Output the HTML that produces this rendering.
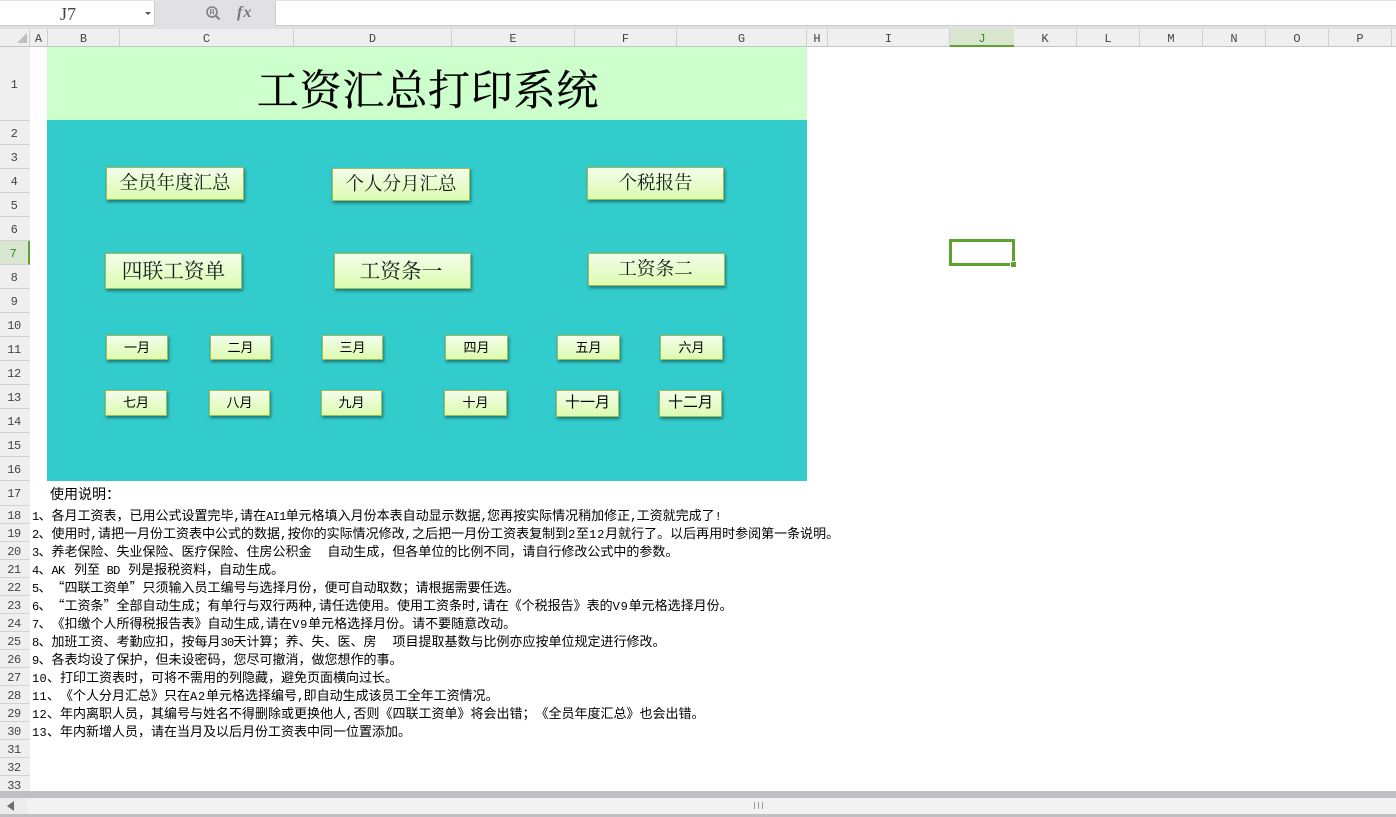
<!DOCTYPE html>
<html lang="zh"><head><meta charset="utf-8"><style>
html,body{margin:0;padding:0;width:1396px;height:817px;overflow:hidden;background:#fff}
body{position:relative;font-family:"Liberation Mono","WenQuanYi Zen Hei",monospace;color:#000;text-spacing-trim:space-all}
div{position:absolute;box-sizing:border-box}
.c,.r{background:#efefef;color:#444;font-size:12px;text-align:center;font-family:"Liberation Mono",monospace}
.c{top:29px;height:17px;line-height:20px;border-right:1px solid #cfcfcf}
.r{left:0;width:30px;border-bottom:1px solid #d2d2d2;font-size:12px;padding-right:2px;padding-top:1px;letter-spacing:-.5px}
.b{background:linear-gradient(#f4fdea,#dcfbb0);border:1px solid #a3bd55;box-shadow:1px 2px 3px rgba(0,50,50,.55);text-align:center;color:#10201a;font-family:"Noto Serif CJK SC",serif;white-space:nowrap}
.m{font-family:"WenQuanYi Zen Hei","Noto Sans CJK SC",sans-serif;font-size:13px;color:#000;line-height:21px;height:25px}
.t{left:32px;height:18px;line-height:18px;font-size:13px;font-family:"WenQuanYi Zen Hei","Noto Sans CJK SC",sans-serif;white-space:pre;color:#000}
.t span{font-family:"Liberation Mono",monospace;font-size:12px;letter-spacing:-.7px}
.t span.w{letter-spacing:.3px}
.t span.v{letter-spacing:.8px}
</style></head><body>
<div style="left:0;top:0;width:1396px;height:29px;background:#e1e1e3"></div>
<div style="left:0;top:1px;width:155px;height:25px;background:#fff;border-bottom:1px solid #ccc;border-right:1px solid #ccc;font-size:18px;line-height:27px;padding-left:60px;color:#444;font-family:'Liberation Serif',serif">J7</div>
<div style="left:145px;top:12px;width:0;height:0;border:3px solid transparent;border-top:3px solid #555"></div>
<svg style="position:absolute;left:205px;top:5px" width="16" height="16" viewBox="0 0 16 16"><circle cx="7" cy="7" r="5" fill="none" stroke="#808080" stroke-width="1.6"/><path d="M11 11l3.500 3.500" stroke="#808080" stroke-width="2"/><path d="M5.500 9.500V4.800h2a1.200 1.200 0 010 2.600h-2M7.500 7.400l1.500 2.100" stroke="#808080" fill="none"/></svg>
<div style="left:237px;top:4px;font:italic bold 16px 'Liberation Serif',serif;color:#777;letter-spacing:1px">fx</div>
<div style="left:275px;top:1px;width:1121px;height:25px;background:#fff;border-left:1px solid #ccc;border-bottom:1px solid #ccc"></div>

<div style="left:0;top:29px;width:1396px;height:18px;background:#efefef;border-bottom:1px solid #c4c4c4"></div>
<div style="left:0;top:29px;width:30px;height:17px;border-right:1px solid #cfcfcf"></div>
<div style="left:17px;top:33px;width:0;height:0;border-left:10px solid transparent;border-bottom:10px solid #bdbdbd"></div>
<div class="c" style="left:30px;width:18px">A</div>
<div class="c" style="left:48px;width:72px">B</div>
<div class="c" style="left:120px;width:174px">C</div>
<div class="c" style="left:294px;width:158px">D</div>
<div class="c" style="left:452px;width:123px">E</div>
<div class="c" style="left:575px;width:102px">F</div>
<div class="c" style="left:677px;width:130px">G</div>
<div class="c" style="left:807px;width:21px">H</div>
<div class="c" style="left:828px;width:122px">I</div>
<div class="c" style="left:950px;width:64px;height:18px;background:#d8e6d0;color:#3a8a1c;border-right:0;border-bottom:2px solid #5ea32f">J</div>
<div class="c" style="left:1014px;width:63px">K</div>
<div class="c" style="left:1077px;width:63px">L</div>
<div class="c" style="left:1140px;width:63px">M</div>
<div class="c" style="left:1203px;width:63px">N</div>
<div class="c" style="left:1266px;width:63px">O</div>
<div class="c" style="left:1329px;width:63px">P</div>
<div class="c" style="left:1392px;width:4px;border-right:0"></div>

<div style="left:0;top:47px;width:30px;height:744px;background:#efefef;border-right:1px solid #c4c4c4"></div>
<div class="r" style="top:47px;height:74px;line-height:74px">1</div>
<div class="r" style="top:121px;height:24px;line-height:24px">2</div>
<div class="r" style="top:145px;height:24px;line-height:24px">3</div>
<div class="r" style="top:169px;height:24px;line-height:24px">4</div>
<div class="r" style="top:193px;height:24px;line-height:24px">5</div>
<div class="r" style="top:217px;height:24px;line-height:24px">6</div>
<div class="r" style="top:241px;height:24px;line-height:24px;background:#d8e6d0;color:#3a8a1c;border-right:2px solid #5ea32f">7</div>
<div class="r" style="top:265px;height:24px;line-height:24px">8</div>
<div class="r" style="top:289px;height:24px;line-height:24px">9</div>
<div class="r" style="top:313px;height:24px;line-height:24px">10</div>
<div class="r" style="top:337px;height:24px;line-height:24px">11</div>
<div class="r" style="top:361px;height:24px;line-height:24px">12</div>
<div class="r" style="top:385px;height:24px;line-height:24px">13</div>
<div class="r" style="top:409px;height:24px;line-height:24px">14</div>
<div class="r" style="top:433px;height:24px;line-height:24px">15</div>
<div class="r" style="top:457px;height:24px;line-height:24px">16</div>
<div class="r" style="top:481px;height:25px;line-height:25px">17</div>
<div class="r" style="top:506px;height:18px;line-height:18px">18</div>
<div class="r" style="top:524px;height:18px;line-height:18px">19</div>
<div class="r" style="top:542px;height:18px;line-height:18px">20</div>
<div class="r" style="top:560px;height:18px;line-height:18px">21</div>
<div class="r" style="top:578px;height:18px;line-height:18px">22</div>
<div class="r" style="top:596px;height:18px;line-height:18px">23</div>
<div class="r" style="top:614px;height:18px;line-height:18px">24</div>
<div class="r" style="top:632px;height:18px;line-height:18px">25</div>
<div class="r" style="top:650px;height:18px;line-height:18px">26</div>
<div class="r" style="top:668px;height:18px;line-height:18px">27</div>
<div class="r" style="top:686px;height:18px;line-height:18px">28</div>
<div class="r" style="top:704px;height:18px;line-height:18px">29</div>
<div class="r" style="top:722px;height:18px;line-height:18px">30</div>
<div class="r" style="top:740px;height:18px;line-height:18px">31</div>
<div class="r" style="top:758px;height:18px;line-height:18px">32</div>
<div class="r" style="top:776px;height:15px;line-height:18px;border-bottom:0;overflow:hidden">33</div>

<div style="left:47px;top:47px;width:760px;height:73px;background:#ccffcc"></div>
<div style="left:47px;top:120px;width:760px;height:361px;background:#33cccc"></div>
<div style="left:47px;top:60px;width:762px;height:56px;line-height:56px;text-align:center;font-family:'Noto Serif CJK SC',serif;font-size:42px;letter-spacing:.8px;color:#000;white-space:nowrap;-webkit-text-stroke:.3px #000">工资汇总打印系统</div>

<div class="b" style="left:106px;top:167px;width:138px;height:33px;font-size:18.500px;line-height:28px">全员年度汇总</div>
<div class="b" style="left:332px;top:168px;width:138px;height:33px;font-size:18.500px;line-height:28px">个人分月汇总</div>
<div class="b" style="left:587px;top:167px;width:137px;height:33px;font-size:18.500px;line-height:28px">个税报告</div>
<div class="b" style="left:105px;top:253px;width:137px;height:36px;font-size:20.700px;line-height:30px">四联工资单</div>
<div class="b" style="left:334px;top:253px;width:137px;height:36px;font-size:20.700px;line-height:30px;padding-right:3px">工资条一</div>
<div class="b" style="left:588px;top:253px;width:137px;height:33px;font-size:18.700px;line-height:28px;padding-right:2px">工资条二</div>

<div class="b m" style="left:106px;top:335px;width:62px">一月</div>
<div class="b m" style="left:210px;top:335px;width:61px">二月</div>
<div class="b m" style="left:322px;top:335px;width:61px">三月</div>
<div class="b m" style="left:445px;top:335px;width:63px">四月</div>
<div class="b m" style="left:557px;top:335px;width:63px">五月</div>
<div class="b m" style="left:660px;top:335px;width:63px">六月</div>
<div class="b m" style="left:105px;top:390px;width:62px;height:26px">七月</div>
<div class="b m" style="left:209px;top:390px;width:61px;height:26px">八月</div>
<div class="b m" style="left:321px;top:390px;width:61px;height:26px">九月</div>
<div class="b m" style="left:444px;top:390px;width:63px;height:26px">十月</div>
<div class="b m" style="left:556px;top:390px;width:63px;height:27px;font-size:15px">十一月</div>
<div class="b m" style="left:659px;top:390px;width:63px;height:27px;font-size:15px">十二月</div>

<div class="t" style="left:50px;top:485px;font-size:14px">使用说明：</div>
<div class="t" style="top:506px"><span>1</span>、各月工资表，已用公式设置完毕<span>,</span>请在<span>AI1</span>单元格填入月份本表自动显示数据<span>,</span>您再按实际情况稍加修正<span>,</span>工资就完成了<span>!</span></div>
<div class="t" style="top:524px"><span>2</span>、使用时<span class="w">,</span>请把一月份工资表中公式的数据<span class="w">,</span>按你的实际情况修改<span class="w">,</span>之后把一月份工资表复制到<span class="v">2</span>至<span class="v">12</span>月就行了。以后再用时参阅第一条说明。</div>
<div class="t" style="top:542px"><span>3</span>、养老保险、失业保险、医疗保险、住房公积金　 自动生成，但各单位的比例不同，请自行修改公式中的参数。</div>
<div class="t" style="top:560px"><span>4</span>、<span style="margin-right:3px">AK </span>列至<span style="margin-right:2px"> BD </span>列是报税资料，自动生成。</div>
<div class="t" style="top:578px"><span>5</span>、“四联工资单”只须输入员工编号与选择月份，便可自动取数；请根据需要任选。</div>
<div class="t" style="top:596px"><span>6</span>、“工资条”全部自动生成；有单行与双行两种<span class="w">,</span>请任选使用。使用工资条时<span class="w">,</span>请在《个税报告》表的<span class="v">V9</span>单元格选择月份。</div>
<div class="t" style="top:614px"><span>7</span>、《扣缴个人所得税报告表》自动生成<span>,</span>请在<span class="v">V9</span>单元格选择月份。请不要随意改动。</div>
<div class="t" style="top:632px"><span>8</span>、加班工资、考勤应扣，按每月<span>30</span>天计算；养、失、医、房　 项目提取基数与比例亦应按单位规定进行修改。</div>
<div class="t" style="top:650px"><span>9</span>、各表均设了保护，但未设密码，您尽可撤消，做您想作的事。</div>
<div class="t" style="top:668px"><span class="w">10</span>、打印工资表时，可将不需用的列隐藏，避免页面横向过长。</div>
<div class="t" style="top:686px"><span class="w">11</span>、《个人分月汇总》只在<span class="v">A2</span>单元格选择编号<span>,</span>即自动生成该员工全年工资情况。</div>
<div class="t" style="top:704px"><span class="w">12</span>、年内离职人员，其编号与姓名不得删除或更换他人<span class="w">,</span>否则《四联工资单》将会出错；《全员年度汇总》也会出错。</div>
<div class="t" style="top:722px"><span class="w">13</span>、年内新增人员，请在当月及以后月份工资表中同一位置添加。</div>

<div style="left:949px;top:239px;width:66px;height:27px;border:3px solid #5ea32f"></div>
<div style="left:1010px;top:261px;width:7px;height:7px;background:#5ea32f;border:1px solid #fff"></div>

<div style="left:0;top:791px;width:1396px;height:26px;background:#c0c0c2"></div>
<div style="left:0;top:798px;width:27px;height:16px;background:#ececec"></div>
<div style="left:27px;top:798px;width:1369px;height:16px;background:#f2f2f2"></div>
<div style="left:7px;top:801px;width:0;height:0;border:5px solid transparent;border-left:0;border-right:7px solid #6e6e6e"></div>
<div style="left:754px;top:802px;width:9px;height:7px;border-left:1px solid #999;border-right:1px solid #999"></div>
<div style="left:758px;top:802px;width:1px;height:7px;background:#999"></div>
</body></html>
